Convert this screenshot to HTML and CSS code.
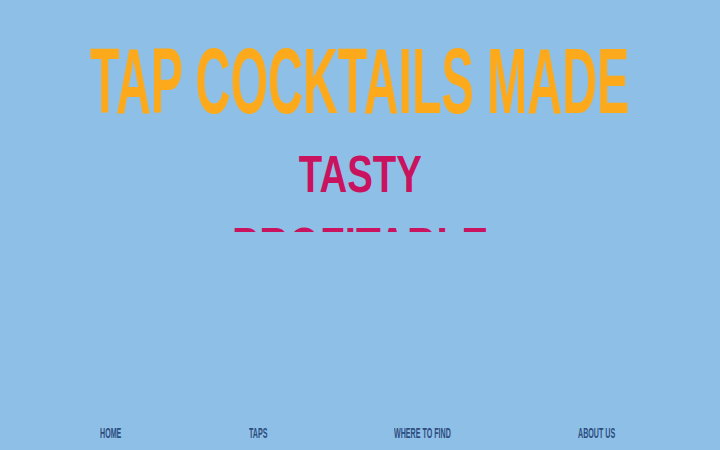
FILE: index.html
```html
<!DOCTYPE html>
<html lang="en">
<head>
<meta charset="utf-8">
<title>Tap Cocktails</title>
<link rel="stylesheet" href="styles.css">
</head>
<body>
  <main class="hero">
    <h1 class="title"><span class="title-text">TAP COCKTAILS MADE</span></h1>
    <div class="rotator">
      <ul class="rotator-list">
        <li class="word"><span class="word-text word-tasty">TASTY</span></li>
        <li class="word"><span class="word-text word-profitable">PROFITABLE</span></li>
      </ul>
    </div>
  </main>
  <nav class="nav">
    <a class="nav-link" href="#"><span class="nav-text">HOME</span></a>
    <a class="nav-link" href="#"><span class="nav-text">TAPS</span></a>
    <a class="nav-link" href="#"><span class="nav-text">WHERE TO FIND</span></a>
    <a class="nav-link" href="#"><span class="nav-text">ABOUT US</span></a>
  </nav>
</body>
</html>
```
FILE: styles.css
```css
html, body {
  margin: 0;
  padding: 0;
}

body {
  width: 720px;
  height: 450px;
  overflow: hidden;
  background: #8ec0e7;
  font-family: "Liberation Sans", Arial, sans-serif;
  font-weight: 700;
  display: flex;
  flex-direction: column;
}

.hero {
  padding-top: 35px;
}

.title {
  margin: 0;
  display: flex;
  justify-content: center;
  font-size: 92px;
  line-height: 1;
  font-weight: 700;
  color: #fcaa1c;
  white-space: nowrap;
}

.title-text {
  display: block;
  flex: none;
  transform: scaleX(0.525);
  transform-origin: center;
}

.rotator {
  margin-top: 27px;
  height: 78px;
  overflow: hidden;
}

.rotator-list {
  list-style: none;
  margin: -16px 0 0 0;
  padding: 0;
}

.word {
  display: flex;
  justify-content: center;
  font-size: 52px;
  line-height: 72px;
  color: #c9135f;
  white-space: nowrap;
}

.word-text {
  display: block;
  flex: none;
  transform-origin: center;
}

.word-tasty {
  transform: scaleX(0.738);
}

.word-profitable {
  transform: scaleX(0.78);
}

.nav {
  margin-top: auto;
  padding: 0 0 10px 100px;
  display: grid;
  grid-template-columns: 149px 145px 184px auto;
}

.nav-link {
  font-size: 15px;
  line-height: 15px;
  color: #2d4d7e;
  text-decoration: none;
  white-space: nowrap;
}

.nav-text {
  display: inline-block;
  transform: scaleX(0.475);
  transform-origin: left center;
}
```
